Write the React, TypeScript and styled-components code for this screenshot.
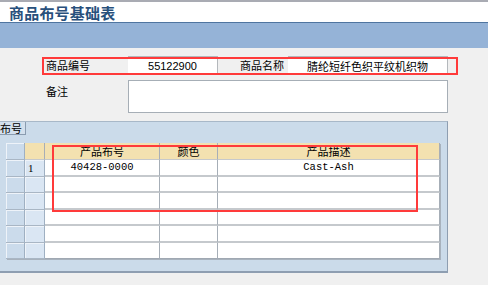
import styled, { createGlobalStyle } from "styled-components";

const GlobalStyle = createGlobalStyle`
  html, body {
    margin: 0;
    padding: 0;
    background: #ffffff;
  }
  body {
    font-family: "Noto Sans CJK SC", "Liberation Sans", sans-serif;
    font-size: 11px;
    color: #000;
  }
`;

const Page = styled.div`
  position: relative;
  width: 488px;
  height: 285px;
  background: #f0f0f0;
  overflow: hidden;
`;

const TitleBar = styled.div`
  height: 20px;
  border-top: 2px solid #a9abb3;
  border-bottom: 1px solid #4f75a0;
  background: #ffffff;
  display: flex;
  align-items: flex-end;
  padding-left: 9px;

  h1 {
    margin: 0;
    font-size: 15px;
    line-height: 18px;
    font-weight: 700;
    color: #28507c;
    letter-spacing: 0.2px;
  }
`;

const Band = styled.div`
  height: 25px;
  background: #95b3d7;
`;

const Form = styled.div`
  display: flex;
  flex-direction: column;
  row-gap: 6px;
  padding: 8px 0 0 42px;
`;

const FieldRow = styled.div`
  display: flex;
  height: 18px;
`;

const Label = styled.div<{ $width: number; $align?: string }>`
  width: ${(p) => p.$width}px;
  display: flex;
  align-items: center;
  justify-content: ${(p) => p.$align ?? "flex-start"};
  padding: 0 4px;
  box-sizing: border-box;
`;

const Value = styled.div<{ $width: number; $cjk?: boolean }>`
  width: ${(p) => p.$width}px;
  box-sizing: border-box;
  background: #ffffff;
  border-top: 1px solid #b4b8bc;
  border-right: 1px solid #b4b8bc;
  display: flex;
  align-items: center;
  justify-content: center;
  font-family: ${(p) =>
    p.$cjk ? `"Noto Sans CJK SC", sans-serif` : `"Liberation Sans", sans-serif`};
  font-size: 11px;
`;

const NoteRow = styled.div`
  display: flex;
  height: 33px;
`;

const NoteLabel = styled.div`
  width: 86px;
  padding: 3px 0 0 4px;
  box-sizing: border-box;
`;

const NoteBox = styled.div`
  width: 320px;
  box-sizing: border-box;
  background: #ffffff;
  border: 1px solid #a6aeb6;
`;

const Panel = styled.div`
  margin-top: 8px;
  width: 448px;
  height: 152px;
  box-sizing: border-box;
  background: #cbdbea;
  border-top: 1px solid #a8b8c8;
  border-right: 1px solid #8e9eb1;
  border-bottom: 2px solid #8e9eb1;
`;

const Tab = styled.div`
  width: 26px;
  height: 13px;
  box-sizing: border-box;
  border: 1px solid #8a9cb0;
  border-top: none;
  border-left: none;
  background: #d3e0ed;
  display: flex;
  align-items: center;
  white-space: nowrap;
  font-size: 11px;
`;

const Grid = styled.div`
  margin: 8px 0 0 6px;
  width: 434px;
  display: grid;
  grid-template-columns: 19px 20px 115px 58px 222px;
  grid-template-rows: 17px repeat(6, 16.5px);
  background: #ffffff;
  box-shadow: 1px 1px 0 #a8b2bd;
`;

const HeadCell = styled.div`
  box-sizing: border-box;
  background: #f3e1b0;
  border-right: 1px solid #a8aeb6;
  border-bottom: 1px solid #c6c9cc;
  display: flex;
  align-items: center;
  justify-content: center;
  padding-top: 1px;
  font-size: 11px;
  line-height: 1;
`;

const RowHead = styled.div<{ $tone: "dark" | "light" }>`
  box-sizing: border-box;
  background: ${(p) => (p.$tone === "dark" ? "#cbdbeb" : "#dae6f3")};
  border-right: 1px solid #9fb0c2;
  border-bottom: 1px solid #a9b6c4;
  box-shadow: inset 1px 1px 0 #eef3f9;
  display: flex;
  align-items: center;
  padding-left: 3px;
  font-family: "Liberation Serif", serif;
  font-size: 11px;
`;

const Cell = styled.div<{ $last?: boolean }>`
  box-sizing: border-box;
  border-right: 1px solid #a6aeb7;
  border-bottom: ${(p) => (p.$last ? "1px solid #a0a8b2" : "2px solid #c5c9cd")};
  display: flex;
  align-items: center;
  justify-content: center;
  font-family: "Liberation Mono", monospace;
  font-size: 10.5px;
  white-space: nowrap;
`;

const Mark = styled.div<{ $x: number; $y: number; $w: number; $h: number }>`
  position: absolute;
  left: ${(p) => p.$x}px;
  top: ${(p) => p.$y}px;
  width: ${(p) => p.$w}px;
  height: ${(p) => p.$h}px;
  box-sizing: border-box;
  border: 2px solid #ff3a3a;
  pointer-events: none;
`;

const rows = [
  { no: "1", code: "40428-0000", color: "", desc: "Cast-Ash" },
  { no: "", code: "", color: "", desc: "" },
  { no: "", code: "", color: "", desc: "" },
  { no: "", code: "", color: "", desc: "" },
  { no: "", code: "", color: "", desc: "" },
  { no: "", code: "", color: "", desc: "" },
];

export default function App() {
  return (
    <>
      <GlobalStyle />
      <Page>
        <TitleBar>
          <h1>商品布号基础表</h1>
        </TitleBar>
        <Band />
        <Form>
          <FieldRow>
            <Label $width={86}>商品编号</Label>
            <Value $width={90}>55122900</Value>
            <Label $width={70} $align="flex-end">
              商品名称
            </Label>
            <Value $width={160} $cjk>
              腈纶短纤色织平纹机织物
            </Value>
          </FieldRow>
          <NoteRow>
            <NoteLabel>备注</NoteLabel>
            <NoteBox />
          </NoteRow>
        </Form>
        <Panel>
          <Tab>布号</Tab>
          <Grid>
            <RowHead $tone="dark" />
            <HeadCell />
            <HeadCell>产品布号</HeadCell>
            <HeadCell>颜色</HeadCell>
            <HeadCell>产品描述</HeadCell>
            {rows.flatMap((r, i) => {
              const last = i === rows.length - 1;
              return [
                <RowHead key={`a${i}`} $tone="dark" />,
                <RowHead key={`b${i}`} $tone="light">
                  {r.no}
                </RowHead>,
                <Cell key={`c${i}`} $last={last}>
                  {r.code}
                </Cell>,
                <Cell key={`d${i}`} $last={last}>
                  {r.color}
                </Cell>,
                <Cell key={`e${i}`} $last={last}>
                  {r.desc}
                </Cell>,
              ];
            })}
          </Grid>
        </Panel>
        <Mark $x={42} $y={57} $w={416} $h={18} />
        <Mark $x={52} $y={145} $w={366} $h={67} />
      </Page>
    </>
  );
}
